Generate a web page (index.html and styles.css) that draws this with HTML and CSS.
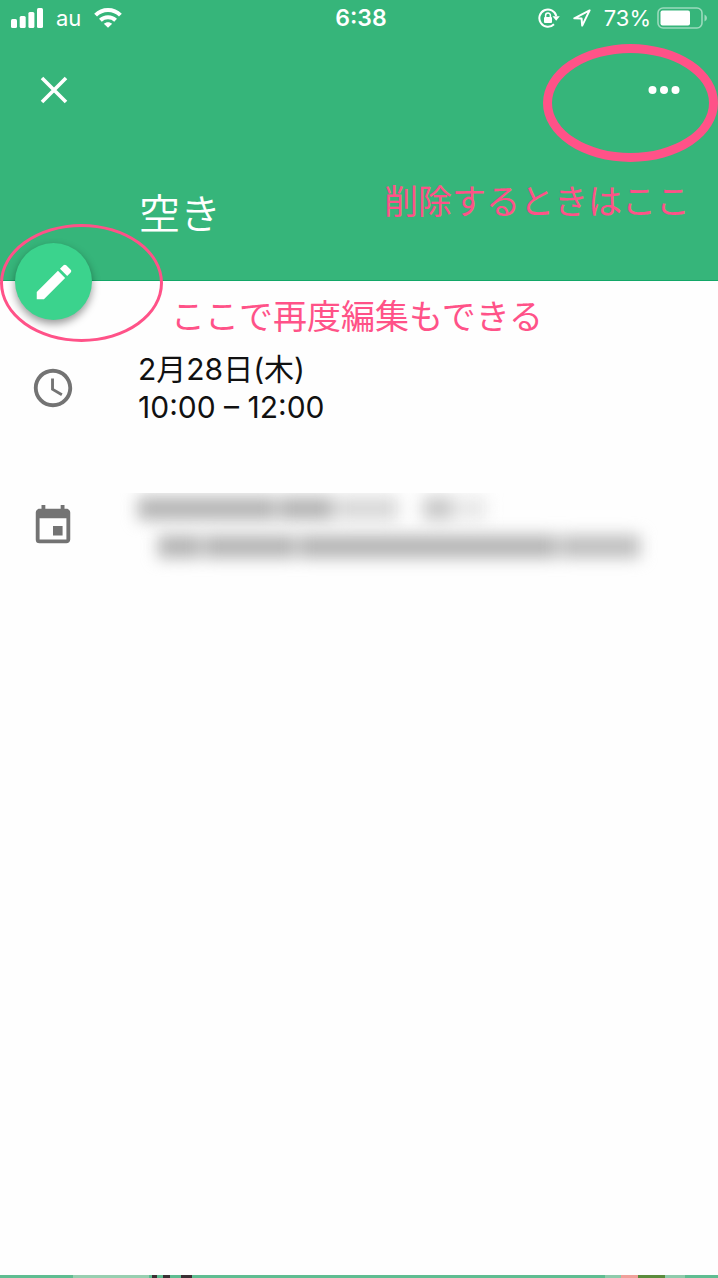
FILE: index.html
```
<!DOCTYPE html>
<html lang="ja">
<head>
    <meta charset="UTF-8">
    <meta name="viewport" content="width=device-width, initial-scale=1.0">
    <title>空き</title>
    <link rel="stylesheet" href="styles.css">
</head>
<body>

    <div class="screen">
        <header class="header">
            <div class="status-bar">
                <div class="status-left">
                    <svg class="signal" width="32" height="20" viewBox="0 0 32 20" fill="currentColor">
                        <rect x="0" y="11" width="6" height="9" rx="1.5"/>
                        <rect x="8.7" y="8" width="6" height="12" rx="1.5"/>
                        <rect x="17.4" y="4" width="6" height="16" rx="1.5"/>
                        <rect x="26" y="0" width="6" height="20" rx="1.5"/>
                    </svg>
                    <span>au</span>
                    <svg width="28" height="20" viewBox="0 0 28 20" fill="none" stroke="currentColor" stroke-width="4">
                        <path d="M1.6 7.2C8.4 .4 19.6 .4 26.4 7.2"/>
                        <path d="M6.4 12.2C10.6 8.2 17.4 8.2 21.6 12.2"/>
                        <path d="M14 19.8L9.8 15.700C12.200 13.600 15.800 13.600 18.200 15.700Z" fill="currentColor" stroke="none"/>
                    </svg>
                </div>
                <span class="time">6:38</span>
                <div class="status-right">
                    <svg width="22" height="20" viewBox="0 0 22 20" fill="none" stroke="currentColor" stroke-width="2">
                        <path d="M18.300 8A8.600 8.600 0 1 0 16 16.200"/>
                        <path d="M14.500 8.300H21.800L18.200 12.800Z" fill="currentColor" stroke="none"/>
                        <rect x="6" y="9" width="8" height="6" rx="1" fill="currentColor" stroke="none"/>
                        <path d="M7.600 9.500V7.400A2.400 2.400 0 0 1 12.400 7.400V9.500" stroke-width="1.500"/>
                    </svg>
                    <svg width="18" height="18" viewBox="0 0 18 18" fill="none" stroke="currentColor" stroke-width="2" stroke-linejoin="round">
                        <path d="M16.600 1.400L1.300 9.300L8.600 9.600L9.200 16.600Z"/>
                    </svg>
                    <span>73%</span>
                    <svg class="battery" width="50" height="22" viewBox="0 0 50 22" fill="currentColor">
                        <rect x="1" y="1" width="44" height="20" rx="5" fill="none" stroke="currentColor" stroke-width="1.600" opacity=".5"/>
                        <rect x="3.500" y="3.500" width="29.500" height="15" rx="2"/>
                        <path d="M47.500 7.500Q50 8.500 50 11T47.500 14.500Z" opacity=".5"/>
                    </svg>
                </div>
            </div>

            <div class="app-bar">
                <button type="button" class="icon-button" aria-label="閉じる">
                    <svg width="28" height="28" viewBox="0 0 28 28" stroke="currentColor" stroke-width="3.600">
                        <path d="M2 2L26 26M26 2L2 26"/>
                    </svg>
                </button>
                <button type="button" class="icon-button" aria-label="その他">
                    <svg width="32" height="10" viewBox="0 0 32 10" fill="currentColor">
                        <circle cx="4.500" cy="5" r="4"/>
                        <circle cx="16" cy="5" r="4"/>
                        <circle cx="27.500" cy="5" r="4"/>
                    </svg>
                </button>
            </div>

            <div class="title-row">
                <h1 class="title">空き</h1>
                <p class="note">削除するときはここ</p>
            </div>

            <button type="button" class="fab" aria-label="編集">
                <svg width="46" height="46" viewBox="0 0 24 24" fill="currentColor">
                    <path d="M3 17.250V21h3.750L17.810 9.940l-3.750-3.750L3 17.250zM20.710 7.040a1 1 0 0 0 0-1.410l-2.340-2.340a1 1 0 0 0-1.410 0l-1.830 1.830 3.750 3.750 1.830-1.830z"/>
                </svg>
            </button>
            <span class="ring ring-menu"></span>
            <span class="ring ring-edit"></span>
        </header>

        <main class="details">
            <p class="note note-edit">ここで再度編集もできる</p>

            <div class="row">
                <svg class="row-icon" width="46" height="46" viewBox="0 0 24 24" fill="currentColor">
                    <path d="M11.990 2C6.470 2 2 6.480 2 12s4.470 10 9.990 10C17.520 22 22 17.520 22 12S17.520 2 11.990 2zM12 20c-4.420 0-8-3.580-8-8s3.580-8 8-8 8 3.580 8 8-3.580 8-8 8zM12.500 7H11v6l5.250 3.150.750-1.230-4.500-2.670z"/>
                </svg>
                <div class="row-text">
                    <div>2月28日(木)</div>
                    <div>10:00 – 12:00</div>
                </div>
            </div>

            <div class="row">
                <svg class="row-icon" width="46" height="46" viewBox="0 0 24 24" fill="currentColor">
                    <path d="M17 12h-5v5h5v-5zM16 1v2H8V1H6v2H5c-1.110 0-1.990.900-1.990 2L3 19a2 2 0 0 0 2 2h14c1.100 0 2-.900 2-2V5c0-1.100-.900-2-2-2h-1V1h-2zm3 18H5V8h14v11z"/>
                </svg>
                <!-- calendar name and address are hidden -->
                <div class="hidden-text">
                    <div class="hidden-line">
                        <span class="bar bar-name"></span>
                        <span class="bar bar-kanji"></span>
                        <span class="bar bar-kana"></span>
                        <span class="bar bar-mark"></span>
                        <span class="bar bar-dash"></span>
                    </div>
                    <div class="hidden-line hidden-line-second">
                        <span class="bar bar-short"></span>
                        <span class="bar bar-medium"></span>
                        <span class="bar bar-long"></span>
                        <span class="bar bar-end"></span>
                    </div>
                </div>
            </div>
        </main>

        <footer class="bottom-strip"></footer>
    </div>

</body>
</html>
```

FILE: styles.css
```
/* General Styles */
* {
    box-sizing: border-box;
}

body {
    margin: 0;
    font-family: Inter, "Noto Sans CJK JP", sans-serif;
    background-color: #fefefe;
    color: #111;
}

h1,
p {
    margin: 0;
}

svg {
    display: block;
    flex: none;
}

button {
    display: flex;
    justify-content: center;
    align-items: center;
    padding: 0;
    border: none;
    background: none;
    color: white;
    cursor: pointer;
}

.screen {
    display: flex;
    flex-direction: column;
    min-height: 100vh;
}

/* Header */
.header {
    position: relative;
    padding-bottom: 42px;
    border-bottom: 1px solid #12a767;
    background-color: #36b57a;
    color: white;
}

.status-bar {
    display: grid;
    grid-template-columns: 1fr auto 1fr;
    align-items: center;
    height: 36px;
    padding: 0 11px;
    font-size: 22px;
}

.status-left,
.status-right {
    display: flex;
    align-items: center;
    gap: 13px;
}

.status-right {
    justify-content: flex-end;
}

.battery {
    margin-left: -7px;
}

.time {
    padding-left: 4px;
    font-size: 23px;
    font-weight: 600;
}

.app-bar {
    display: flex;
    justify-content: space-between;
    padding: 30px 30px 0;
}

.icon-button {
    width: 48px;
    height: 48px;
}

.title-row {
    display: flex;
    justify-content: space-between;
    height: 60px;
    margin-top: 64px;
    padding: 0 28px 0 139px;
}

.title {
    align-self: flex-end;
    font-size: 41px;
    font-weight: 350;
    line-height: 48px;
}

/* Pink notes and rings */
.note {
    color: #ff5288;
    font-size: 34px;
    line-height: 48px;
}

.note-edit {
    padding-left: 171px;
}

.ring {
    position: absolute;
    height: 118px;
    border: 3px solid #ff5288;
    border-radius: 50%;
    pointer-events: none;
}

.ring-menu {
    top: 44px;
    right: 0;
    width: 175px;
    border-width: 9px;
}

.ring-edit {
    top: 224px;
    left: 0;
    width: 163px;
}

/* Edit button over the header edge */
.fab {
    position: absolute;
    bottom: -40px;
    left: 15px;
    width: 77px;
    height: 77px;
    border-radius: 50%;
    background-color: #3bd38d;
    box-shadow: 0 4px 8px rgba(0, 0, 0, 0.4);
}

/* Event details */
.details {
    flex: 1;
    padding-top: 12px;
}

.row {
    display: flex;
    align-items: center;
    gap: 62px;
    height: 76px;
    margin-bottom: 62px;
    padding: 0 30px;
}

.note-edit + .row {
    margin-top: 9px;
}

.row-icon {
    color: #737373;
}

.row-text {
    font-size: 30px;
    line-height: 38px;
}

/* Hidden calendar name */
.hidden-text {
    flex: 1;
    overflow: hidden;
    height: 86px;
    margin: 10px -20px -10px -30px;
    padding-left: 30px;
}

.hidden-line {
    display: flex;
    gap: 3px;
    height: 38px;
    padding-top: 4px;
    filter: blur(8px);
}

.hidden-line-second {
    padding: 4px 0 0 20px;
}

.bar {
    height: 23px;
    background-color: #b4b4b4;
}

.bar-name {
    width: 138px;
}

.bar-kanji {
    width: 54px;
}

.bar-kana {
    width: 62px;
    background-color: #d8d8d8;
}

.bar-mark {
    width: 30px;
    margin-left: 22px;
    background-color: #c8c8c8;
}

.bar-dash {
    width: 30px;
    background-color: #e8e8e8;
}

.bar-short {
    width: 43px;
}

.bar-medium {
    width: 92px;
}

.bar-long {
    width: 258px;
}

.bar-end {
    width: 80px;
    background-color: #bebebe;
}

/* Sliver of the page below */
.bottom-strip {
    height: 3px;
    background: linear-gradient(to right,
        #5fbd91 73px, #97cfb0 73px 149px, #5fbd91 149px 152px,
        #3a2f33 152px 157px, #5fbd91 157px 163px, #3a2f33 163px 170px,
        #5fbd91 170px 181px, #3a2f33 181px 192px, #5fbd91 192px 605px,
        #8ecbab 605px 621px, #f0a19b 621px 638px, #5b8b3c 638px 665px,
        #8ecbab 665px 685px, #5fbd91 685px);
}
```
